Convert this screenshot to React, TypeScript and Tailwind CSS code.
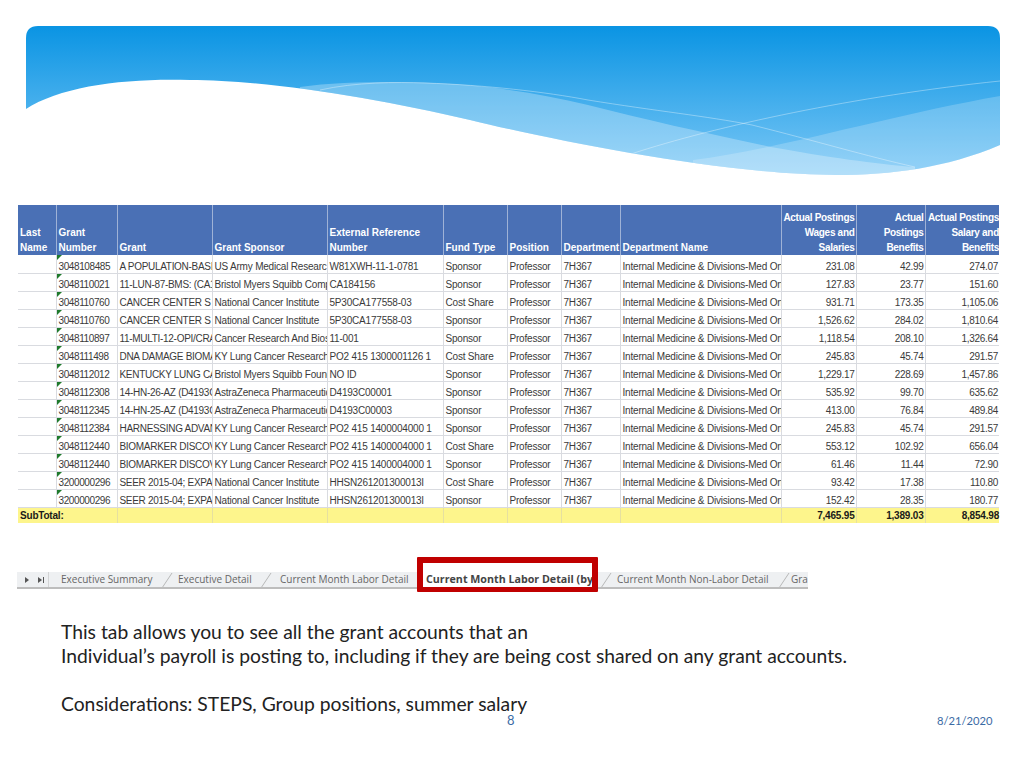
import React from 'react';

const rows = [
  ['3048108485', 'A POPULATION-BASI', 'US Army Medical Researc', 'W81XWH-11-1-0781', 'Sponsor', '231.08', '42.99', '274.07'],
  ['3048110021', '11-LUN-87-BMS: (CA1', 'Bristol Myers Squibb Comp', 'CA184156', 'Sponsor', '127.83', '23.77', '151.60'],
  ['3048110760', 'CANCER CENTER S', 'National Cancer Institute', '5P30CA177558-03', 'Cost Share', '931.71', '173.35', '1,105.06'],
  ['3048110760', 'CANCER CENTER S', 'National Cancer Institute', '5P30CA177558-03', 'Sponsor', '1,526.62', '284.02', '1,810.64'],
  ['3048110897', '11-MULTI-12-OPI/CRA', 'Cancer Research And Bios', '11-001', 'Sponsor', '1,118.54', '208.10', '1,326.64'],
  ['3048111498', 'DNA DAMAGE BIOMA', 'KY Lung Cancer Research', 'PO2 415 1300001126 1', 'Cost Share', '245.83', '45.74', '291.57'],
  ['3048112012', 'KENTUCKY LUNG CA', 'Bristol Myers Squibb Found', 'NO ID', 'Sponsor', '1,229.17', '228.69', '1,457.86'],
  ['3048112308', '14-HN-26-AZ (D4193C', 'AstraZeneca Pharmaceutic', 'D4193C00001', 'Sponsor', '535.92', '99.70', '635.62'],
  ['3048112345', '14-HN-25-AZ (D4193C', 'AstraZeneca Pharmaceutic', 'D4193C00003', 'Sponsor', '413.00', '76.84', '489.84'],
  ['3048112384', 'HARNESSING ADVAN', 'KY Lung Cancer Research', 'PO2 415 1400004000 1', 'Sponsor', '245.83', '45.74', '291.57'],
  ['3048112440', 'BIOMARKER DISCOV', 'KY Lung Cancer Research', 'PO2 415 1400004000 1', 'Cost Share', '553.12', '102.92', '656.04'],
  ['3048112440', 'BIOMARKER DISCOV', 'KY Lung Cancer Research', 'PO2 415 1400004000 1', 'Sponsor', '61.46', '11.44', '72.90'],
  ['3200000296', 'SEER 2015-04; EXPA', 'National Cancer Institute', 'HHSN261201300013I', 'Cost Share', '93.42', '17.38', '110.80'],
  ['3200000296', 'SEER 2015-04; EXPA', 'National Cancer Institute', 'HHSN261201300013I', 'Sponsor', '152.42', '28.35', '180.77'],
];

const widths = ['w-[38px]', 'w-[61px]', 'w-[95px]', 'w-[115px]', 'w-[116px]', 'w-[64px]', 'w-[54px]', 'w-[59px]', 'w-[161px]', 'w-[75px]', 'w-[69px]', 'w-[74px]'];

const td = 'border-r border-b border-[#d9dbe0] px-[2px] pb-[1px] align-bottom whitespace-nowrap overflow-hidden';
const num = 'border-r border-b border-[#d9dbe0] pr-[1px] pb-[1px] align-bottom text-right tracking-[-0.3px] whitespace-nowrap overflow-hidden';
const th = 'border-r border-[#9fb2d6] px-[2px] align-bottom font-bold whitespace-nowrap overflow-hidden';
const thr = 'border-r border-[#9fb2d6] pr-[1px] align-bottom font-bold text-right tracking-[-0.3px] whitespace-nowrap overflow-hidden';
const sub = 'border-r border-[#e6e0a0] pt-[1px]';

const Banner = () => (
  <svg viewBox="0 0 974 150" className="block w-[974px] h-[150px]">
    <defs>
      <linearGradient id="sky" x1="0" y1="0" x2="0" y2="1">
        <stop offset="0" stopColor="#0a94e3" />
        <stop offset="1" stopColor="#7cc8f6" />
      </linearGradient>
      <clipPath id="waveClip">
        <path d="M0 83 C35 60 100 52 164 54 C240 54 350 72 444 94 C530 115 700 149 810 149 C865 149 920 142 974 119 L974 12 Q974 0 962 0 L12 0 Q0 0 0 12 Z" />
      </clipPath>
    </defs>
    <g clipPath="url(#waveClip)">
      <rect x="0" y="0" width="974" height="150" fill="url(#sky)" />
      <path d="M274 61 C300 57 335 56 366 56 C440 56 500 64 562 79 C620 94 680 107 745 121 C800 131 850 138 889 141 L889 170 L274 170 Z" fill="#ffffff" fillOpacity="0.28" />
      <path d="M667 134 C750 124 860 90 974 70 L974 170 L667 170 Z" fill="#ffffff" fillOpacity="0.2" />
      <path d="M294 64 C330 56 370 56 399 57 C460 59 520 66 562 74 C630 85 680 90 726 99 C790 115 840 130 889 141" fill="none" stroke="#ffffff" strokeOpacity="0.35" />
      <path d="M605 128 C690 100 830 70 974 55" fill="none" stroke="#ffffff" strokeOpacity="0.35" />
    </g>
  </svg>
);

const Marker = () => (
  <svg viewBox="0 0 5 5" className="absolute left-0 top-0 w-[5px] h-[5px]">
    <path d="M0 0 H5 L0 5 Z" fill="#1f7a2c" />
  </svg>
);

const Slant = ({ right }: { right: string }) => (
  <svg viewBox="0 0 11 17" className={`absolute top-0 w-[11px] h-[17px] ${right}`}>
    <path d="M0 16 L10 1" fill="none" stroke="#b8b8b8" />
  </svg>
);

export default function App() {
  return (
    <div className="w-[1024px] h-[768px] bg-white overflow-hidden flex flex-col font-['Liberation_Sans',sans-serif]">
      <div className="pt-[26px] pl-[26px]">
        <Banner />
      </div>

      <div className="pl-[18px] pt-[29px]">
        <table className="table-fixed border-collapse w-[981px] text-[10px] leading-[10px] tracking-[-0.2px] text-[#3a3a3a]">
          <colgroup>
            {widths.map((w, i) => (
              <col key={i} className={w} />
            ))}
          </colgroup>
          <thead>
            <tr className="h-[50px] bg-[#4a70b5] text-white text-left leading-[15px] tracking-normal">
              <th className={th}>Last<br />Name</th>
              <th className={th}>Grant<br />Number</th>
              <th className={th}>Grant</th>
              <th className={th}>Grant Sponsor</th>
              <th className={th}>External Reference<br />Number</th>
              <th className={th}>Fund Type</th>
              <th className={th}>Position</th>
              <th className={th}>Department</th>
              <th className={th}>Department Name</th>
              <th className={thr}>Actual Postings<br />Wages and<br />Salaries</th>
              <th className={thr}>Actual<br />Postings<br />Benefits</th>
              <th className="align-bottom font-bold text-right tracking-[-0.3px] whitespace-nowrap overflow-hidden">Actual Postings<br />Salary and<br />Benefits</th>
            </tr>
          </thead>
          <tbody>
            {rows.map((r, i) => (
              <tr key={i} className="h-[18px]">
                <td className={td}></td>
                <td className={`${td} relative tracking-[-0.4px]`}><Marker />{r[0]}</td>
                <td className={`${td} tracking-[-0.3px]`}>{r[1]}</td>
                <td className={td}>{r[2]}</td>
                <td className={td}>{r[3]}</td>
                <td className={td}>{r[4]}</td>
                <td className={td}>Professor</td>
                <td className={td}>7H367</td>
                <td className={td}>Internal Medicine &amp; Divisions-Med On</td>
                <td className={num}>{r[5]}</td>
                <td className={num}>{r[6]}</td>
                <td className={`${num} pr-0 border-r-0`}>{r[7]}</td>
              </tr>
            ))}
            <tr className="h-[16px] bg-[#fdf58c] font-bold text-[#1a1a1a]">
              <td colSpan={2} className={`${sub} px-[2px]`}>SubTotal:</td>
              <td className={sub}></td>
              <td className={sub}></td>
              <td className={sub}></td>
              <td className={sub}></td>
              <td className={sub}></td>
              <td className={sub}></td>
              <td className={sub}></td>
              <td className={`${sub} pr-[1px] text-right`}>7,465.95</td>
              <td className={`${sub} pr-[1px] text-right`}>1,389.03</td>
              <td className="pt-[1px] text-right">8,854.98</td>
            </tr>
          </tbody>
        </table>
      </div>

      <div className="relative ml-[17px] mt-[49px] w-[791px] h-[17px]">
        <div className="w-[791px] h-[17px] bg-[#eef0f2] border-b-[2px] border-[#bdbdbd] flex items-center text-[10px] text-[#666666] font-['Open_Sans',sans-serif] whitespace-nowrap overflow-hidden">
          <span className="w-[44px] h-[15px] shrink-0">
            <svg viewBox="0 0 32 15" className="w-[32px] h-[15px]">
              <path d="M8 5 L12 8 L8 11 Z" fill="#555555" />
              <path d="M21 5 L25 8 L21 11 Z" fill="#555555" />
              <path d="M26.5 5 V11" stroke="#555555" />
              <path d="M32 0 V15" stroke="#b8b8b8" />
            </svg>
          </span>
          <span className="relative w-[117px] h-[15px] leading-[15px] shrink-0">Executive Summary<Slant right="right-[5px]" /></span>
          <span className="relative w-[102px] h-[15px] leading-[15px] shrink-0">Executive Detail<Slant right="right-[8px]" /></span>
          <span className="w-[146px] h-[15px] leading-[15px] shrink-0">Current Month Labor Detail</span>
          <span className="relative w-[191px] h-[15px] shrink-0"><Slant right="right-[5px]" /></span>
          <span className="relative w-[174px] h-[15px] leading-[15px] shrink-0">Current Month Non-Labor Detail<Slant right="right-[1px]" /></span>
          <span className="shrink-0">Gra</span>
        </div>
        <div className="absolute left-[400px] top-[-15px] w-[181px] h-[35px] border-x-[6px] border-t-[6px] border-b-[5px] border-[#c00000] rounded-[1px] bg-white flex items-end pl-[3px] text-[10.7px] leading-[16px] font-bold text-[#444444] font-['Open_Sans',sans-serif] whitespace-nowrap overflow-hidden">
          Current Month Labor Detail (by
        </div>
      </div>

      <div className="pl-[61px] pt-[31px] text-[19.3px] leading-[24px] text-[#222222] font-['Lato',sans-serif]">
        <p>This tab allows you to see all the grant accounts that an</p>
        <p>Individual’s payroll is posting to, including if they are being cost shared on any grant accounts.</p>
        <p className="mt-[24px]">Considerations: STEPS, Group positions, summer salary</p>
      </div>

      <div className="flex -mt-[4px] pl-[507px] text-[13px] leading-[16px] text-[#3b6ba5] font-['Lato',sans-serif]">
        <span className="w-[430px]">8</span>
        <span className="pt-[1px] text-[11.2px]">8/21/2020</span>
      </div>
    </div>
  );
}
